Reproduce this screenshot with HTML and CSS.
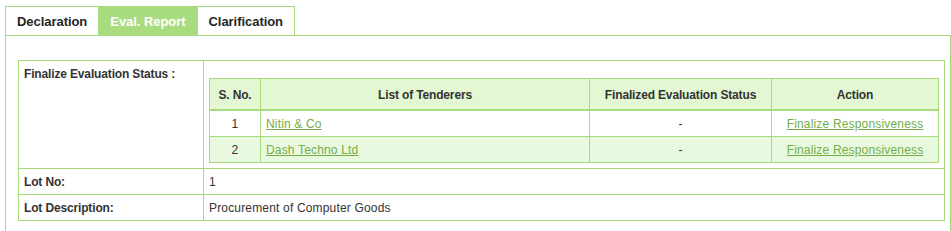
FILE: index.html
```html
<!DOCTYPE html>
<html lang="en">
<head>
    <meta charset="UTF-8">
    <title>Evaluation Report</title>
    <link rel="stylesheet" href="styles.css">
</head>
<body>
    <div class="page">
        <ul class="tabs">
            <li><a href="#">Declaration</a></li>
            <li class="active"><a href="#">Eval. Report</a></li>
            <li><a href="#">Clarification</a></li>
        </ul>
        <div class="tab-panel">
            <table class="form-table">
                <tr class="status-row">
                    <td class="label">Finalize Evaluation Status :</td>
                    <td class="value nested">
                        <table class="list-table">
                            <tr>
                                <th class="col-sno">S. No.</th>
                                <th class="col-name">List of Tenderers</th>
                                <th class="col-status">Finalized Evaluation Status</th>
                                <th class="col-action">Action</th>
                            </tr>
                            <tr>
                                <td class="center">1</td>
                                <td><a href="#">Nitin &amp; Co</a></td>
                                <td class="center">-</td>
                                <td class="center"><a href="#">Finalize Responsiveness</a></td>
                            </tr>
                            <tr class="alt">
                                <td class="center">2</td>
                                <td><a href="#">Dash Techno Ltd</a></td>
                                <td class="center">-</td>
                                <td class="center"><a href="#">Finalize Responsiveness</a></td>
                            </tr>
                        </table>
                    </td>
                </tr>
                <tr>
                    <td class="label">Lot No:</td>
                    <td class="value">1</td>
                </tr>
                <tr>
                    <td class="label">Lot Description:</td>
                    <td class="value">Procurement of Computer Goods</td>
                </tr>
            </table>
        </div>
    </div>
</body>
</html>
```

FILE: styles.css
```css
body {
    margin: 0;
    font-family: Arial, "Liberation Sans", sans-serif;
    font-size: 12px;
    letter-spacing: 0.17px;
    color: #333;
    background: #fff;
    overflow: hidden;
}
.page {
    padding: 6px 0 0 5px;
}
.tabs {
    display: flex;
    list-style: none;
    margin: 0;
    padding: 0;
}
.tabs li {
    border: 1px solid #a6db7c;
    border-bottom: none;
    border-left: none;
}
.tabs li:first-child {
    border-left: 1px solid #a6db7c;
}
.tabs a {
    display: block;
    height: 28px;
    line-height: 30px;
    padding: 0 11px;
    font-size: 13px;
    font-weight: bold;
    letter-spacing: -0.05px;
    color: #262626;
    text-decoration: none;
}
.tabs .active {
    background: #a9dc7f;
}
.tabs .active a {
    color: #fff;
}
.tab-panel {
    border: 1px solid #a6db7c;
    border-bottom: none;
    height: 171px;
    padding: 24px 5px 0 12px;
}
.form-table {
    width: 927px;
    border-collapse: collapse;
    border: 1px solid #a6db7c;
}
.form-table td {
    border: 1px solid #a6db7c;
    padding: 6px 5px 4px;
    height: 15px;
    vertical-align: top;
}
.form-table .label {
    width: 174px;
    font-weight: bold;
    letter-spacing: -0.15px;
    color: #333;
}
.form-table .value.nested {
    padding: 17px 5px 5px 5px;
}
.list-table {
    width: 100%;
    border-collapse: collapse;
    border: 1px solid #a6db7c;
}
.list-table th {
    background: #e3f8d2;
    border: 1px solid #a6db7c;
    border-bottom: 2px solid #a6db7c;
    height: 29px;
    padding: 1px 5px 0;
    font-weight: bold;
    letter-spacing: -0.15px;
    color: #333;
}
.form-table .list-table td {
    border: 1px solid #a6db7c;
    padding: 1px 5px 0;
    height: 24px;
    vertical-align: middle;
}
.list-table .alt td {
    background: #e9f9df;
}
.list-table .center {
    text-align: center;
}
.col-sno {
    width: 40px;
}
.col-name {
    width: 318px;
}
.col-status {
    width: 171px;
}
.list-table a {
    color: #74ae48;
    text-decoration: underline;
}
```
